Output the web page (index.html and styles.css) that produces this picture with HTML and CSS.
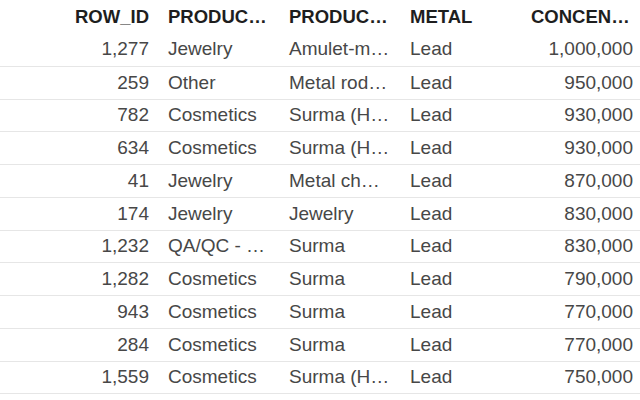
FILE: index.html
```html
<!DOCTYPE html>
<html>
<head>
<meta charset="utf-8">
<link rel="stylesheet" href="styles.css">
</head>
<body>
<div class="table">
  <div class="row head">
    <div class="cell num first">ROW_ID</div>
    <div class="cell">PRODUC…</div>
    <div class="cell">PRODUC…</div>
    <div class="cell">METAL</div>
    <div class="cell last">CONCEN…</div>
  </div>
  <div class="body">
    <div class="row"><div class="cell num first">1,277</div><div class="cell">Jewelry</div><div class="cell">Amulet-m…</div><div class="cell">Lead</div><div class="cell num last">1,000,000</div></div>
    <div class="row"><div class="cell num first">259</div><div class="cell">Other</div><div class="cell">Metal rod…</div><div class="cell">Lead</div><div class="cell num last">950,000</div></div>
    <div class="row"><div class="cell num first">782</div><div class="cell">Cosmetics</div><div class="cell">Surma (H…</div><div class="cell">Lead</div><div class="cell num last">930,000</div></div>
    <div class="row"><div class="cell num first">634</div><div class="cell">Cosmetics</div><div class="cell">Surma (H…</div><div class="cell">Lead</div><div class="cell num last">930,000</div></div>
    <div class="row"><div class="cell num first">41</div><div class="cell">Jewelry</div><div class="cell">Metal ch…</div><div class="cell">Lead</div><div class="cell num last">870,000</div></div>
    <div class="row"><div class="cell num first">174</div><div class="cell">Jewelry</div><div class="cell">Jewelry</div><div class="cell">Lead</div><div class="cell num last">830,000</div></div>
    <div class="row"><div class="cell num first">1,232</div><div class="cell">QA/QC - …</div><div class="cell">Surma</div><div class="cell">Lead</div><div class="cell num last">830,000</div></div>
    <div class="row"><div class="cell num first">1,282</div><div class="cell">Cosmetics</div><div class="cell">Surma</div><div class="cell">Lead</div><div class="cell num last">790,000</div></div>
    <div class="row"><div class="cell num first">943</div><div class="cell">Cosmetics</div><div class="cell">Surma</div><div class="cell">Lead</div><div class="cell num last">770,000</div></div>
    <div class="row"><div class="cell num first">284</div><div class="cell">Cosmetics</div><div class="cell">Surma</div><div class="cell">Lead</div><div class="cell num last">770,000</div></div>
    <div class="row"><div class="cell num first">1,559</div><div class="cell">Cosmetics</div><div class="cell">Surma (H…</div><div class="cell">Lead</div><div class="cell num last">750,000</div></div>
  </div>
</div>
</body>
</html>
```
FILE: styles.css
```css
html, body {
  margin: 0;
  padding: 0;
  overflow: hidden;
  background: #ffffff;
}
body {
  font-family: "Liberation Sans", Arial, sans-serif;
  font-size: 19px;
  color: #474747;
}
.table {
  width: 640px;
}
.row {
  display: grid;
  grid-template-columns: 160px 121px 121px 121px 1fr;
  align-items: center;
  height: 32.75px;
  box-sizing: border-box;
}
.head {
  height: 33px;
  font-size: 18.5px;
  font-weight: bold;
  color: #1e1e1e;
}
.body .row + .row {
  border-top: 1px solid #e6e6e6;
}
.body .row:last-child {
  height: 33.75px;
  border-bottom: 1px solid #e6e6e6;
}
.cell {
  padding: 0 8px;
  white-space: nowrap;
  overflow: hidden;
  text-overflow: ellipsis;
}
.num {
  text-align: right;
}
.first {
  padding-right: 11px;
}
.last {
  padding-right: 7px;
}
```
